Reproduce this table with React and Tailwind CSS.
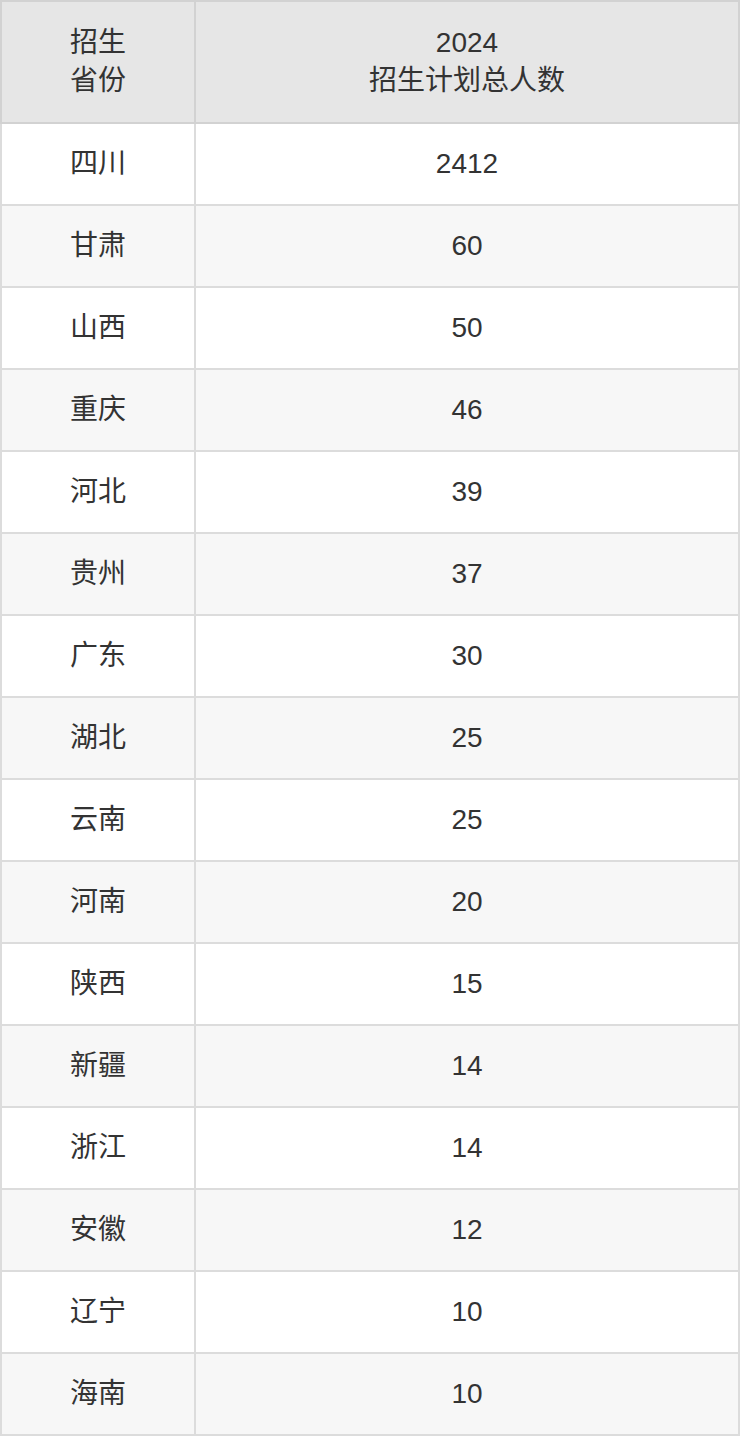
import React from 'react'

const rows = [
  ['四川', '2412'],
  ['甘肃', '60'],
  ['山西', '50'],
  ['重庆', '46'],
  ['河北', '39'],
  ['贵州', '37'],
  ['广东', '30'],
  ['湖北', '25'],
  ['云南', '25'],
  ['河南', '20'],
  ['陕西', '15'],
  ['新疆', '14'],
  ['浙江', '14'],
  ['安徽', '12'],
  ['辽宁', '10'],
  ['海南', '10'],
]

export default function App() {
  return (
    <div className="w-[740px] bg-white font-['Liberation_Sans','Noto_Sans_CJK_SC',sans-serif] text-[28px] text-[#333]">
      <table className="w-full border-collapse border-2 border-[#d9d9d9] text-center">
        <thead>
          <tr className="h-[122px] bg-[#e6e6e6]">
            <th className="w-[194px] border-2 border-[#d2d2d2] font-normal leading-[38px]">
              招生<br />省份
            </th>
            <th className="border-2 border-[#d2d2d2] font-normal leading-[38px]">
              2024<br />招生计划总人数
            </th>
          </tr>
        </thead>
        <tbody>
          {rows.map(([name, count], i) => (
            <tr key={name + i} className={i % 2 === 0 ? 'h-[82px] bg-white' : 'h-[82px] bg-[#f7f7f7]'}>
              <td className="border-2 border-[#dcdcdc]">{name}</td>
              <td className="border-2 border-[#dcdcdc]">{count}</td>
            </tr>
          ))}
        </tbody>
      </table>
    </div>
  )
}
